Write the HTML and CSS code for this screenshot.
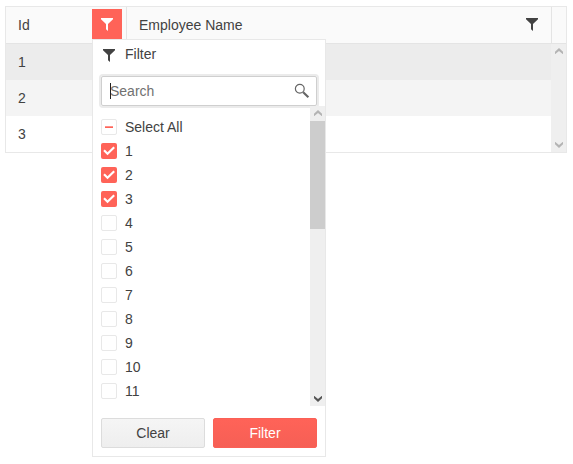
FILE: index.html
```html
<!DOCTYPE html>
<html lang="en">
<head>
<meta charset="utf-8">
<title>Employees</title>
<link rel="stylesheet" href="styles.css">
</head>
<body>
<svg width="0" height="0" class="defs">
  <symbol id="funnel" viewBox="0 0 12 14"><path d="M0 0H12V1.2L7 6V13L5 11.2V6L0 1.2Z"/></symbol>
  <symbol id="tick" viewBox="0 0 16 16"><path d="M3 7.3L6.5 10.7L13.2 4.2" fill="none" stroke="#fff" stroke-width="2.2"/></symbol>
  <symbol id="up" viewBox="0 0 8 6"><path d="M0 3.8L4 0L8 3.8V6.3L4 3L0 6.3Z"/></symbol>
</svg>
<div class="grid">
  <div class="head">
    <div class="cell id">Id<span class="filter-btn"><svg class="funnel"><use href="#funnel"/></svg></span></div>
    <div class="cell name">Employee Name<svg class="funnel"><use href="#funnel"/></svg></div>
    <div class="corner"></div>
  </div>
  <div class="body">
    <div class="rows">
      <div class="row hover">1</div>
      <div class="row alt">2</div>
      <div class="row">3</div>
    </div>
    <div class="scroll"><svg class="arrow"><use href="#up"/></svg><svg class="arrow down"><use href="#up"/></svg></div>
  </div>
</div>
<div class="popup">
  <div class="title"><svg class="funnel"><use href="#funnel"/></svg>Filter</div>
  <div class="search"><span class="caret"></span>Search
    <svg class="lens" viewBox="0 0 16 16"><circle cx="5.8" cy="5.7" r="4.4" fill="none" stroke="#656565" stroke-width="1.2"/><path d="M9.2 9.2L14.4 14.2" stroke="#656565" stroke-width="2.2"/></svg>
  </div>
  <div class="list">
    <div class="items">
      <div class="item"><span class="box part"></span>Select All</div>
      <div class="item"><span class="box on"><svg><use href="#tick"/></svg></span>1</div>
      <div class="item"><span class="box on"><svg><use href="#tick"/></svg></span>2</div>
      <div class="item"><span class="box on"><svg><use href="#tick"/></svg></span>3</div>
      <div class="item"><span class="box"></span>4</div>
      <div class="item"><span class="box"></span>5</div>
      <div class="item"><span class="box"></span>6</div>
      <div class="item"><span class="box"></span>7</div>
      <div class="item"><span class="box"></span>8</div>
      <div class="item"><span class="box"></span>9</div>
      <div class="item"><span class="box"></span>10</div>
      <div class="item"><span class="box"></span>11</div>
    </div>
    <div class="scroll"><svg class="arrow"><use href="#up"/></svg><span class="thumb"></span><svg class="arrow down dark"><use href="#up"/></svg></div>
  </div>
  <div class="actions"><button class="btn">Clear</button><button class="btn primary">Filter</button></div>
</div>
</body>
</html>
```
FILE: styles.css
```css
* { box-sizing: border-box; }
body {
  margin: 0;
  padding: 6px 0 0 5px;
  background: #fff;
  color: #424242;
  font: 14px/20px "Liberation Sans", Arial, sans-serif;
}
svg { display: block; flex: none; }
.defs { position: absolute; }
.grid { width: 562px; height: 147px; border: 1px solid #e8e8e8; }
.head { display: flex; height: 37px; background: #fafafa; border-bottom: 1px solid #e4e4e4; }
.cell { display: flex; align-items: center; justify-content: space-between; padding-left: 12px; }
.id { width: 120px; padding-right: 4px; }
.name { flex: 1; border-left: 1px solid #e4e4e4; padding-right: 13px; }
.corner { width: 15px; border-left: 1px solid #e4e4e4; }
.filter-btn { display: flex; align-items: center; justify-content: center; width: 30px; height: 30px; margin-top: -2px; background: #ff6358; }
.funnel { width: 12px; height: 14px; fill: #424242; }
.filter-btn .funnel { fill: #fff; margin-top: 2px; }
.body { display: flex; height: 108px; }
.rows { flex: 1; }
.row { height: 36px; line-height: 37px; padding-left: 12px; }
.hover { background: #ececec; }
.alt { background: #f4f4f4; }
.scroll { display: flex; flex-direction: column; align-items: center; width: 15px; padding: 4px 0; background: #efefef; }
.arrow { width: 8px; height: 6px; fill: #b4b4b4; overflow: visible; }
.down { transform: rotate(180deg); margin-top: auto; }
.dark { fill: #555; }
.thumb { width: 15px; height: 108px; margin-top: 5px; background: #cdcdcd; }

.popup {
  position: absolute;
  left: 92px;
  top: 39px;
  width: 234px;
  height: 418px;
  background: #fff;
  border: 1px solid #e8e8e8;
}
.title { display: flex; align-items: center; height: 28px; padding-left: 10px; gap: 10px; }
.title .funnel { margin-top: 4px; }
.search {
  position: relative;
  display: flex;
  align-items: center;
  width: 216px;
  height: 30px;
  margin: 8px 8px 0;
  padding: 0 6px 0 8px;
  border: 1px solid #cfcfcf;
  border-radius: 2px;
  box-shadow: 0 0 0 2px #ebebeb;
  color: #717171;
}
.caret { position: absolute; left: 8px; top: 6px; width: 1px; height: 16px; background: #222; }
.lens { width: 16px; height: 16px; margin-left: auto; }
.list { position: relative; display: flex; height: 300px; }
.items { flex: 1; padding: 9px 0 0 8px; }
.item { display: flex; align-items: center; height: 24px; gap: 8px; }
.box { width: 16px; height: 16px; border: 1px solid #e8e8e8; border-radius: 2px; }
.box svg { width: 16px; height: 16px; }
.on { background: #ff6358; border: 0; }
.part { display: flex; align-items: center; justify-content: center; }
.part::before { content: ""; width: 8px; height: 2px; background: linear-gradient(#ff9189 50%, #ff6358 50%); }
.actions { display: flex; gap: 8px; padding: 12px 8px 0; }
.btn {
  flex: 1;
  height: 30px;
  padding: 0;
  border: 1px solid #dcdcdc;
  border-radius: 2px;
  background: linear-gradient(#f5f5f5, #eeeeee);
  color: #424242;
  font: inherit;
}
.primary { border-color: #fa6056; background: linear-gradient(#ff6358, #f65f55); color: #fff; }
```
